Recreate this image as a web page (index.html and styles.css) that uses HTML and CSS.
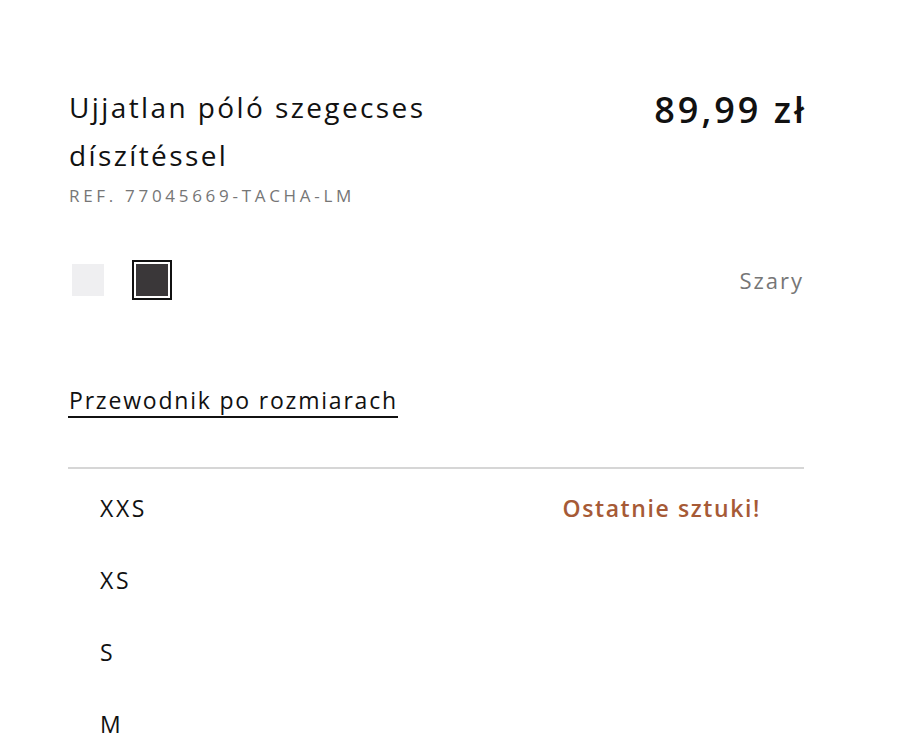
FILE: index.html
```html
<!DOCTYPE html>
<html lang="pl">

<head>
    <meta charset="UTF-8">
    <meta name="viewport" content="width=device-width, initial-scale=1.0">
    <title>Ujjatlan póló szegecses díszítéssel</title>
    <link rel="stylesheet" href="styles.css">
</head>

<body>
    <div class="product">
        <div class="product-header">
            <div class="product-info">
                <h1 class="product-name">Ujjatlan póló szegecses díszítéssel</h1>
                <p class="product-ref">REF. 77045669-TACHA-LM</p>
            </div>
            <div class="product-price">89,99 zł</div>
        </div>

        <div class="colors">
            <div class="swatches">
                <button class="swatch" aria-label="Biały"><span class="swatch-fill light"></span></button>
                <button class="swatch selected" aria-label="Szary"><span class="swatch-fill dark"></span></button>
            </div>
            <span class="color-name">Szary</span>
        </div>

        <a class="size-guide" href="#">Przewodnik po rozmiarach</a>

        <ul class="sizes">
            <li class="size">
                <span>XXS</span>
                <span class="last-items">Ostatnie sztuki!</span>
            </li>
            <li class="size"><span>XS</span></li>
            <li class="size"><span>S</span></li>
            <li class="size"><span>M</span></li>
        </ul>
    </div>
</body>

</html>
```

FILE: styles.css
```css
* {
    box-sizing: border-box;
}

body {
    font-family: 'Open Sans', 'Noto Sans', sans-serif;
    background-color: #fff;
    color: #111;
    margin: 0;
    padding: 0;
}

.product {
    width: 736px;
    margin-left: 68px;
    padding-top: 83px;
}

.product-header {
    display: flex;
    justify-content: space-between;
    align-items: flex-start;
}

.product-name {
    margin: 0;
    width: 450px;
    font-size: 28px;
    font-weight: 500;
    line-height: 48px;
    letter-spacing: 2.4px;
    padding-left: 1px;
}

.product-ref {
    margin: 5px 0 0;
    padding-left: 1px;
    font-size: 17px;
    line-height: 24px;
    letter-spacing: 3.7px;
    color: #767676;
}

.product-price {
    font-size: 36px;
    font-weight: 600;
    line-height: 52px;
    letter-spacing: 3px;
    margin-top: 1px;
    margin-right: -3px;
}

.colors {
    display: flex;
    justify-content: space-between;
    align-items: center;
    margin-top: 52px;
}

.swatches {
    display: flex;
    align-items: center;
    gap: 24px;
}

.swatch {
    display: flex;
    padding: 2px;
    margin: 0;
    width: 40px;
    height: 40px;
    border: 2px solid transparent;
    background: none;
    cursor: pointer;
}

.swatch.selected {
    border-color: #111;
}

.swatch-fill {
    flex: 1;
}

.swatch-fill.light {
    background-color: #efeff1;
}

.swatch-fill.dark {
    background-color: #3a3739;
}

.color-name {
    font-size: 22px;
    letter-spacing: 2px;
    color: #767676;
}

.size-guide {
    display: inline-block;
    margin-top: 84px;
    padding-left: 1px;
    font-size: 23px;
    line-height: 32px;
    letter-spacing: 1.8px;
    color: #111;
    text-decoration: none;
    border-bottom: 2px solid #111;
}

.sizes {
    list-style: none;
    margin: 49px 0 0;
    padding: 0;
    border-top: 2px solid #d6d6d6;
}

.size {
    display: flex;
    justify-content: space-between;
    align-items: center;
    height: 72px;
    padding: 6px 44px 0 32px;
    font-size: 23px;
    letter-spacing: 2.6px;
}

.last-items {
    color: #a65a36;
    font-weight: 600;
    letter-spacing: 1.6px;
    margin-right: -1px;
}
```
